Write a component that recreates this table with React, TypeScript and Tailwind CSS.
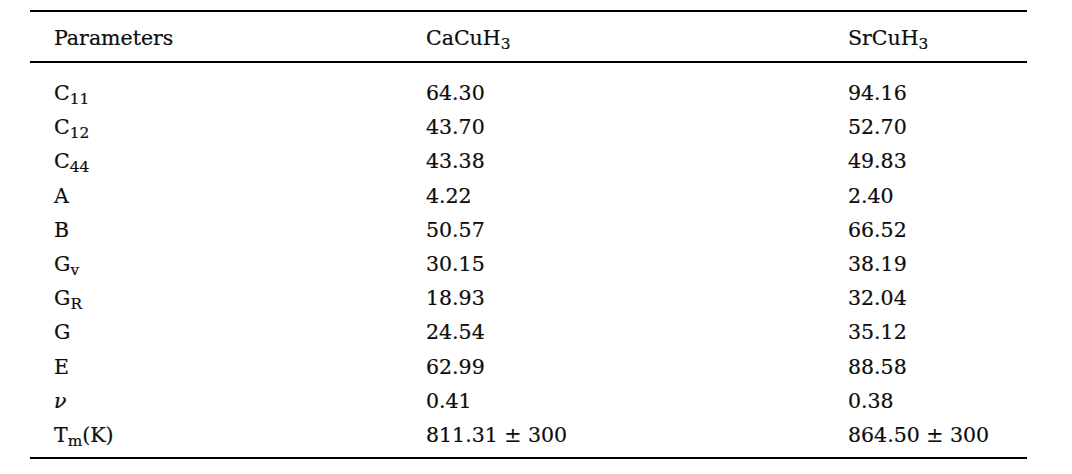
const rows: [React.ReactNode, string, string][] = [
  [<>C<sub>11</sub></>, '64.30', '94.16'],
  [<>C<sub>12</sub></>, '43.70', '52.70'],
  [<>C<sub>44</sub></>, '43.38', '49.83'],
  ['A', '4.22', '2.40'],
  ['B', '50.57', '66.52'],
  [<>G<sub>v</sub></>, '30.15', '38.19'],
  [<>G<sub>R</sub></>, '18.93', '32.04'],
  ['G', '24.54', '35.12'],
  ['E', '62.99', '88.58'],
  [<i>ν</i>, '0.41', '0.38'],
  [<>T<sub>m</sub>(K)</>, '811.31 ± 300', '864.50 ± 300'],
]

const App = () => {
  return (
    <div className="w-[1072px] h-[474px] bg-white text-[#0d0d0d] font-['DejaVu_Serif',serif] text-[20.5px] leading-[34px] [-webkit-text-stroke:0.2px_#0d0d0d]">
      <div className="pt-[10px] pl-[30px]">
        <div className="w-[997px] border-t-2 border-black">
          <div className="grid grid-cols-[372px_422px_1fr] px-6 pt-[9px] pb-[6px] border-b-2 border-black">
            <div>Parameters</div>
            <div>
              CaCuH<sub>3</sub>
            </div>
            <div>
              SrCuH<sub>3</sub>
            </div>
          </div>
          <div className="pt-[13px] pb-[5px] border-b-2 border-black">
            {rows.map((r, idx) => (
              <div
                key={idx}
                className="grid grid-cols-[372px_422px_1fr] px-6 h-[34.2px]"
              >
                <div>{r[0]}</div>
                <div>{r[1]}</div>
                <div>{r[2]}</div>
              </div>
            ))}
          </div>
        </div>
      </div>
    </div>
  )
}

export default App
